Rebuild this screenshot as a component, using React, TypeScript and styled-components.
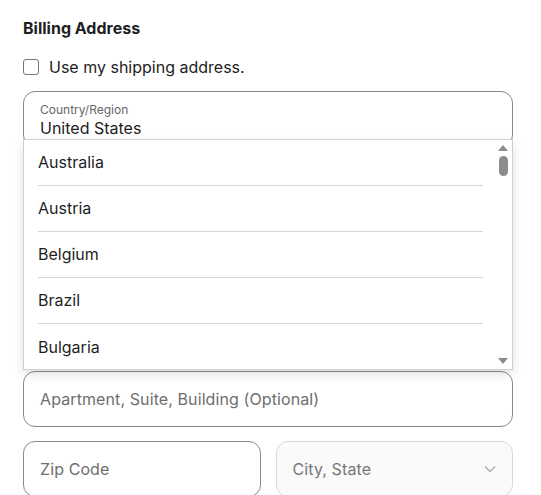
import React from "react";
import styled, { createGlobalStyle } from "styled-components";

const Global = createGlobalStyle`
  html, body { margin: 0; padding: 0; background: #fff; }
  body { font-family: Inter, "Noto Sans", Arial, sans-serif; color: #222; }
  * { box-sizing: border-box; }
`;

const Page = styled.div`
  width: 541px;
  padding: 18px 28px 0 23px;
`;

const Title = styled.h2`
  margin: 0;
  font-size: 16px;
  line-height: 20px;
  font-weight: 700;
  color: #1f1f1f;
`;

const CheckRow = styled.label`
  margin-top: 19px;
  display: flex;
  align-items: center;
  gap: 10px;
  height: 20px;
  font-size: 16px;
  color: #222;
`;

const Box = styled.span`
  width: 16px;
  height: 16px;
  border: 1px solid #767676;
  border-radius: 3px;
  background: #fff;
`;

const Fields = styled.div`
  margin-top: 14px;
  display: flex;
  flex-direction: column;
  gap: 14px;
`;

const Anchor = styled.div`
  position: relative;
`;

const Field = styled.div<{ $disabled?: boolean }>`
  height: 56px;
  flex-shrink: 0;
  border: 1px solid ${(p) => (p.$disabled ? "#d9d9d9" : "#8a8a8a")};
  background: ${(p) => (p.$disabled ? "#fafafa" : "#fff")};
  border-radius: 12px;
  padding: 0 16px;
  display: flex;
  flex-direction: column;
  justify-content: center;
  position: relative;
`;

const Label = styled.span`
  font-size: 12px;
  line-height: 14px;
  color: #666;
  margin-top: 3px;
`;

const Value = styled.span`
  font-size: 16px;
  line-height: 22px;
  color: #222;
`;

const Placeholder = styled.span<{ $disabled?: boolean }>`
  font-size: 16px;
  letter-spacing: 0.1px;
  color: ${(p) => (p.$disabled ? "#777" : "#6e6e6e")};
`;

const Row = styled.div`
  display: flex;
  gap: 15px;
  & > * {
    flex: 1 1 0;
  }
`;

const Chevron = styled.svg`
  position: absolute;
  right: 16px;
  top: 50%;
  margin-top: -4px;
`;

const List = styled.div`
  position: absolute;
  top: 48px;
  left: 0;
  width: 490px;
  height: 231px;
  background: #fff;
  border: 1px solid #cfcfcf;
  box-shadow: 0 4px 10px rgba(0, 0, 0, 0.12);
  display: flex;
  z-index: 2;
`;

const Options = styled.ul`
  list-style: none;
  margin: 0;
  padding: 0 0 0 14px;
  flex: 1;
`;

const Option = styled.li<{ $last?: boolean }>`
  height: 46px;
  display: flex;
  align-items: center;
  padding-bottom: 1px;
  font-size: 16px;
  color: #1f1f1f;
  border-bottom: ${(p) => (p.$last ? "none" : "1px solid #d6d6d6")};
`;

const Scroll = styled.div`
  width: 29px;
  padding-left: 13px;
  padding-right: 2px;
  display: flex;
  flex-direction: column;
  align-items: center;
  padding-top: 5px;
  padding-bottom: 5px;
`;

const Thumb = styled.div`
  width: 9px;
  height: 20px;
  border-radius: 5px;
  background: #8c8c8c;
  margin-top: 5px;
`;

const Spacer = styled.div`
  flex: 1;
`;

const countries = ["Australia", "Austria", "Belgium", "Brazil", "Bulgaria"];

export default function App() {
  return (
    <Page>
      <Global />
      <Title>Billing Address</Title>
      <CheckRow>
        <Box />
        Use my shipping address.
      </CheckRow>
      <Fields>
        <Anchor>
          <Field>
            <Label>Country/Region</Label>
            <Value>United States</Value>
          </Field>
          <List>
            <Options>
              {countries.map((c, i) => (
                <Option key={c} $last={i === countries.length - 1}>
                  {c}
                </Option>
              ))}
            </Options>
            <Scroll>
              <svg width="10" height="6" viewBox="0 0 10 6">
                <path d="M0 6 L5 0 L10 6 Z" fill="#8c8c8c" />
              </svg>
              <Thumb />
              <Spacer />
              <svg width="10" height="6" viewBox="0 0 10 6">
                <path d="M0 0 L10 0 L5 6 Z" fill="#8c8c8c" />
              </svg>
            </Scroll>
          </List>
        </Anchor>
        <Row>
          <Field />
          <Field />
        </Row>
        <Field />
        <Field />
        <Field>
          <Placeholder>Apartment, Suite, Building (Optional)</Placeholder>
        </Field>
        <Row>
          <Field>
            <Placeholder>Zip Code</Placeholder>
          </Field>
          <Field $disabled>
            <Placeholder $disabled>City, State</Placeholder>
            <Chevron width="12" height="8" viewBox="0 0 12 8">
              <path d="M1 1.5 L6 6.5 L11 1.5" fill="none" stroke="#aaa" strokeWidth="1.3" />
            </Chevron>
          </Field>
        </Row>
      </Fields>
    </Page>
  );
}
